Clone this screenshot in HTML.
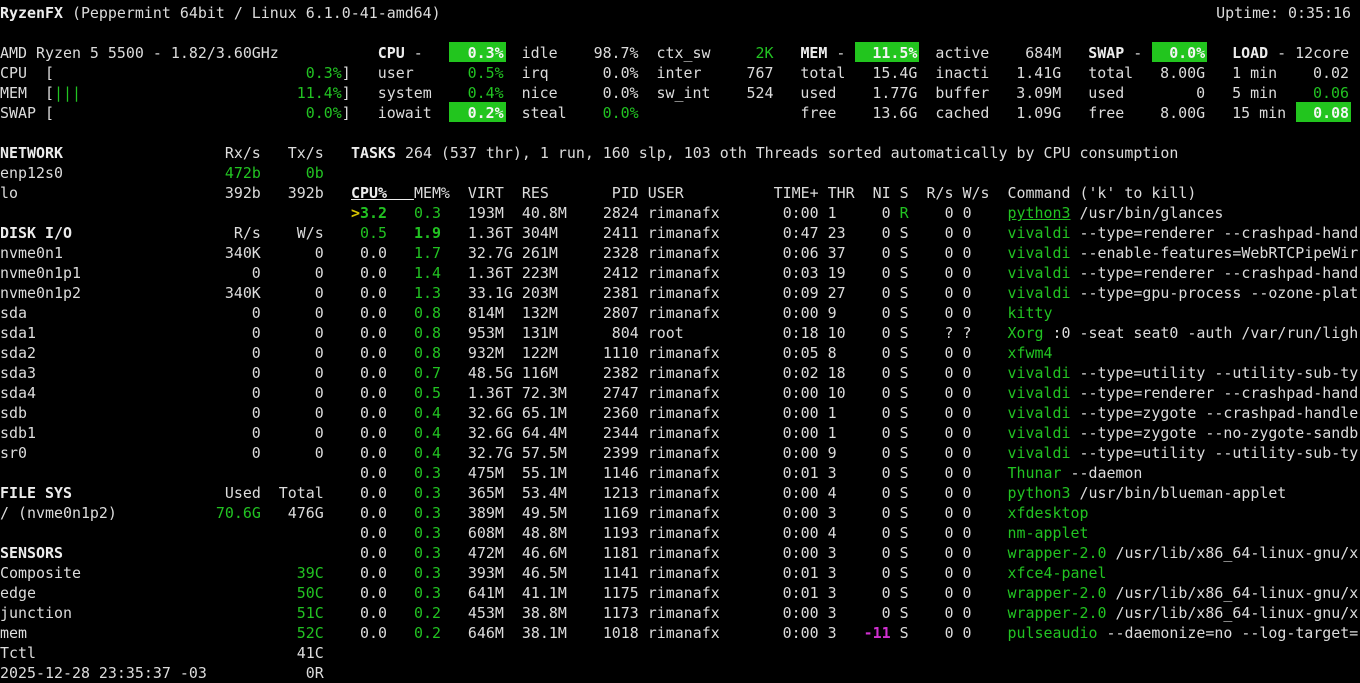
<!DOCTYPE html>
<html><head><meta charset="utf-8"><style>
html,body{margin:0;padding:0;background:#000;width:1360px;height:683px;overflow:hidden}
pre{position:absolute;margin:0;font-family:"DejaVu Sans Mono","Liberation Mono",monospace;font-size:14.95px;line-height:20px;color:#dcdcdc;white-space:pre}
b{font-weight:bold;color:#ececec}
.g{color:#22c322}
.gb{color:#22c322;font-weight:bold}
.y{color:#d7c400;font-weight:bold}
.m{color:#d030d0;font-weight:bold}
.u{text-decoration:underline}
.bar{position:absolute;background:#22c51e;height:20px}
.w{color:#f4f4f4;font-weight:bold}
</style></head><body>
<div class="bar" style="left:449px;top:42px;width:57px"></div>
<div class="bar" style="left:449px;top:102px;width:57px"></div>
<div class="bar" style="left:855px;top:42px;width:64px"></div>
<div class="bar" style="left:1152px;top:42px;width:55px"></div>
<div class="bar" style="left:1296px;top:102px;width:55px"></div>
<pre style="left:0;top:3px"><b>RyzenFX</b> (Peppermint 64bit / Linux 6.1.0-41-amd64)

AMD Ryzen 5 5500 - 1.82/3.60GHz           <b>CPU</b> -     <span class="w">0.3%</span>  idle    98.7%  ctx_sw     <span class="g">2K</span>   <b>MEM</b> -   <span class="w">11.5%</span>  active    684M   <b>SWAP</b> -   <span class="w">0.0%</span>   <b>LOAD</b> - 12core
CPU  [                            <span class="g">0.3%</span>]   user      <span class="g">0.5%</span>  irq      0.0%  inter     767   total   15.4G  inacti   1.41G   total   8.00G   1 min    0.02
MEM  [<span class="g">|||</span>                        <span class="g">11.4%</span>]   system    <span class="g">0.4%</span>  nice     0.0%  sw_int    524   used    1.77G  buffer   3.09M   used        0   5 min    <span class="g">0.06</span>
SWAP [                            <span class="g">0.0%</span>]   iowait    <span class="w">0.2%</span>  steal    <span class="g">0.0%</span>                  free    13.6G  cached   1.09G   free    8.00G   15 min   <span class="w">0.08</span></pre>
<pre style="right:9px;top:3px">Uptime: 0:35:16</pre>
<pre style="left:0;top:143px"><b>NETWORK</b>                  Rx/s   Tx/s
enp12s0                  <span class="g">472b</span>     <span class="g">0b</span>
lo                       392b   392b

<b>DISK I/O</b>                  R/s    W/s
nvme0n1                  340K      0
nvme0n1p1                   0      0
nvme0n1p2                340K      0
sda                         0      0
sda1                        0      0
sda2                        0      0
sda3                        0      0
sda4                        0      0
sdb                         0      0
sdb1                        0      0
sr0                         0      0

<b>FILE SYS</b>                 Used  Total
/ (nvme0n1p2)           <span class="g">70.6G</span>   476G

<b>SENSORS</b>
Composite                        <span class="g">39C</span>
edge                             <span class="g">50C</span>
junction                         <span class="g">51C</span>
mem                              <span class="g">52C</span>
Tctl                             41C
2025-12-28 23:35:37 -03           0R</pre>
<pre style="left:351px;top:143px"><b>TASKS</b> 264 (537 thr), 1 run, 160 slp, 103 oth Threads sorted automatically by CPU consumption

<b class="u">CPU%   </b>MEM%  VIRT  RES       PID USER          TIME+ THR  NI S  R/s W/s  Command ('k' to kill)
<span class="y">&gt;</span><span class="gb">3.2</span>   <span class="g">0.3</span>   193M  40.8M    2824 rimanafx       0:00 1     0 <span class="g">R</span>    0 0    <span class="g u">python3</span> /usr/bin/glances
 <span class="g">0.5</span>   <span class="gb">1.9</span>   1.36T 304M     2411 rimanafx       0:47 23    0 S    0 0    <span class="g">vivaldi</span> --type=renderer --crashpad-hand
 0.0   <span class="g">1.7</span>   32.7G 261M     2328 rimanafx       0:06 37    0 S    0 0    <span class="g">vivaldi</span> --enable-features=WebRTCPipeWir
 0.0   <span class="g">1.4</span>   1.36T 223M     2412 rimanafx       0:03 19    0 S    0 0    <span class="g">vivaldi</span> --type=renderer --crashpad-hand
 0.0   <span class="g">1.3</span>   33.1G 203M     2381 rimanafx       0:09 27    0 S    0 0    <span class="g">vivaldi</span> --type=gpu-process --ozone-plat
 0.0   <span class="g">0.8</span>   814M  132M     2807 rimanafx       0:00 9     0 S    0 0    <span class="g">kitty</span>
 0.0   <span class="g">0.8</span>   953M  131M      804 root           0:18 10    0 S    ? ?    <span class="g">Xorg</span> :0 -seat seat0 -auth /var/run/ligh
 0.0   <span class="g">0.8</span>   932M  122M     1110 rimanafx       0:05 8     0 S    0 0    <span class="g">xfwm4</span>
 0.0   <span class="g">0.7</span>   48.5G 116M     2382 rimanafx       0:02 18    0 S    0 0    <span class="g">vivaldi</span> --type=utility --utility-sub-ty
 0.0   <span class="g">0.5</span>   1.36T 72.3M    2747 rimanafx       0:00 10    0 S    0 0    <span class="g">vivaldi</span> --type=renderer --crashpad-hand
 0.0   <span class="g">0.4</span>   32.6G 65.1M    2360 rimanafx       0:00 1     0 S    0 0    <span class="g">vivaldi</span> --type=zygote --crashpad-handle
 0.0   <span class="g">0.4</span>   32.6G 64.4M    2344 rimanafx       0:00 1     0 S    0 0    <span class="g">vivaldi</span> --type=zygote --no-zygote-sandb
 0.0   <span class="g">0.4</span>   32.7G 57.5M    2399 rimanafx       0:00 9     0 S    0 0    <span class="g">vivaldi</span> --type=utility --utility-sub-ty
 0.0   <span class="g">0.3</span>   475M  55.1M    1146 rimanafx       0:01 3     0 S    0 0    <span class="g">Thunar</span> --daemon
 0.0   <span class="g">0.3</span>   365M  53.4M    1213 rimanafx       0:00 4     0 S    0 0    <span class="g">python3</span> /usr/bin/blueman-applet
 0.0   <span class="g">0.3</span>   389M  49.5M    1169 rimanafx       0:00 3     0 S    0 0    <span class="g">xfdesktop</span>
 0.0   <span class="g">0.3</span>   608M  48.8M    1193 rimanafx       0:00 4     0 S    0 0    <span class="g">nm-applet</span>
 0.0   <span class="g">0.3</span>   472M  46.6M    1181 rimanafx       0:00 3     0 S    0 0    <span class="g">wrapper-2.0</span> /usr/lib/x86_64-linux-gnu/x
 0.0   <span class="g">0.3</span>   393M  46.5M    1141 rimanafx       0:01 3     0 S    0 0    <span class="g">xfce4-panel</span>
 0.0   <span class="g">0.3</span>   641M  41.1M    1175 rimanafx       0:01 3     0 S    0 0    <span class="g">wrapper-2.0</span> /usr/lib/x86_64-linux-gnu/x
 0.0   <span class="g">0.2</span>   453M  38.8M    1173 rimanafx       0:00 3     0 S    0 0    <span class="g">wrapper-2.0</span> /usr/lib/x86_64-linux-gnu/x
 0.0   <span class="g">0.2</span>   646M  38.1M    1018 rimanafx       0:00 3   <span class="m">-11</span> S    0 0    <span class="g">pulseaudio</span> --daemonize=no --log-target=</pre>
</body></html>
